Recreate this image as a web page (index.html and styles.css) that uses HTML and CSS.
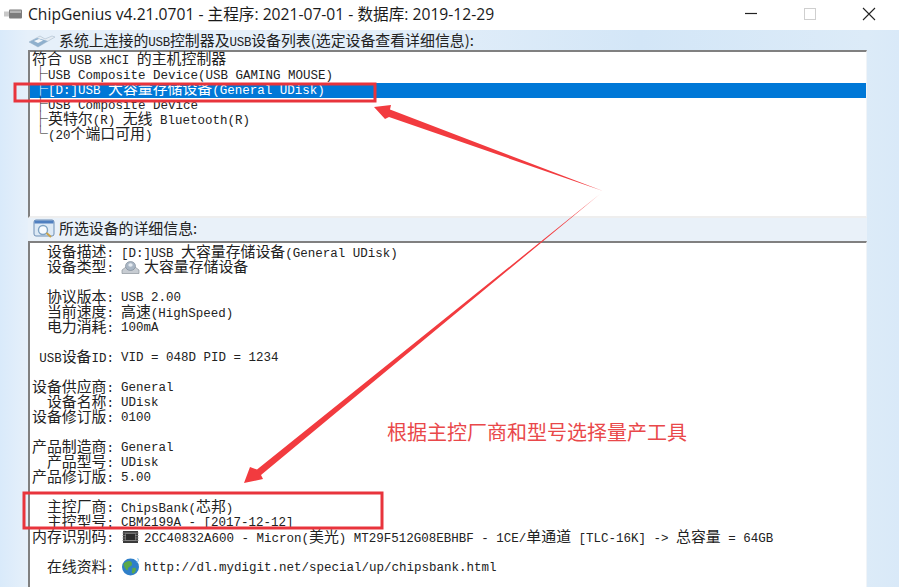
FILE: index.html
```html
<!DOCTYPE html>
<html lang="zh-CN">
<head>
<meta charset="utf-8">
<title>ChipGenius</title>
<link rel="stylesheet" href="styles.css">
</head>
<body>
<div class="window">
  <header class="titlebar">
    <svg class="app-icon" width="18" height="10" viewBox="0 0 18 10"><rect x="0" y="2.500" width="5" height="5" fill="#c9c9c9"/><rect x="5" y="0.500" width="13" height="9" rx="1" fill="#7d7d7d"/><rect x="6" y="1.500" width="11" height="2.500" fill="#b5b5b5"/></svg>
    <span class="title-text">ChipGenius v4.21.0701 - 主程序: 2021-07-01 - 数据库: 2019-12-29</span>
    <div class="controls">
      <svg class="ctl" width="14" height="14" viewBox="0 0 14 14"><path d="M1 6.500H13" stroke="#222" stroke-width="1.200"/></svg>
      <svg class="ctl" width="14" height="14" viewBox="0 0 14 14"><rect x="1.500" y="1.500" width="11" height="11" fill="none" stroke="#cfcfcf"/></svg>
      <svg class="ctl" width="14" height="14" viewBox="0 0 14 14"><path d="M1 1L13 13M13 1L1 13" stroke="#222" stroke-width="1.100"/></svg>
    </div>
  </header>
  <main class="client">
    <div class="caption">
      <svg class="cap-icon-a" width="28" height="14" viewBox="0 0 28 14"><path d="M1 8L10 13L27 3L24 2L17 5L12 2Z" fill="#e6edf4" stroke="#a9bccd" stroke-width=".6"/><path d="M1 8L10 13L20 7L9 4Z" fill="#8fb0cd"/><path d="M6 7L10 9L15 6.500L11 5Z" fill="#f4f7fa"/></svg>
      <span class="z">系统上连接的</span><span class="n">USB</span><span class="z">控制器及</span><span class="n">USB</span><span class="z">设备列表(选定设备查看详细信息):</span>
    </div>
    <section class="list">
      <div class="row"><span class="z">符合</span> USB xHCI <span class="z">的主机控制器</span></div>
      <div class="row"><span class="z tree">├</span>USB Composite Device(USB GAMING MOUSE)</div>
      <div class="row selected"><span class="z tree">├</span>[D:]USB <span class="z">大容量存储设备</span>(General UDisk)</div>
      <div class="row"><span class="z tree">├</span>USB Composite Device</div>
      <div class="row"><span class="z tree">├</span><span class="z">英特尔</span>(R) <span class="z">无线</span> Bluetooth(R)</div>
      <div class="row"><span class="z tree">└</span>(20<span class="z">个端口可用</span>)</div>
    </section>
    <div class="caption second">
      <svg class="cap-icon-b" width="22" height="19" viewBox="0 0 22 19"><rect x="1" y="1" width="20" height="16" rx="2" fill="#dce9f5" stroke="#6f8fb5"/><rect x="1.500" y="1.500" width="19" height="3" fill="#4f7fc0"/><circle cx="10" cy="11" r="4.500" fill="#f7fbff" stroke="#7fa3c4" stroke-width="1.400"/><path d="M13.500 14L18 18" stroke="#c9a24a" stroke-width="2"/></svg>
      <span class="z">所选设备的详细信息:</span>
    </div>
    <section class="details">
      <div class="kv"><span class="k"><span class="z">设备描述</span>:</span><span class="v">[D:]USB <span class="z">大容量存储设备</span>(General UDisk)</span></div>
      <div class="kv"><span class="k"><span class="z">设备类型</span>:</span><span class="v"><svg class="inl" width="19" height="15" viewBox="0 0 19 15"><path d="M1 10L5 7H14L18 10V13.500H1Z" fill="#c7ccd2" stroke="#8b939b" stroke-width=".7"/><ellipse cx="9.500" cy="6" rx="5" ry="4.500" fill="#a9b6c4" stroke="#7b8794" stroke-width=".6"/><ellipse cx="9.500" cy="5" rx="2.200" ry="1.700" fill="#e4eaf0"/></svg><span class="z">大容量存储设备</span></span></div>
      <div class="blank"></div>
      <div class="kv"><span class="k"><span class="z">协议版本</span>:</span><span class="v">USB 2.00</span></div>
      <div class="kv"><span class="k"><span class="z">当前速度</span>:</span><span class="v"><span class="z">高速</span>(HighSpeed)</span></div>
      <div class="kv"><span class="k"><span class="z">电力消耗</span>:</span><span class="v">100mA</span></div>
      <div class="blank"></div>
      <div class="kv"><span class="k">USB<span class="z">设备</span>ID:</span><span class="v">VID = 048D PID = 1234</span></div>
      <div class="blank"></div>
      <div class="kv"><span class="k"><span class="z">设备供应商</span>:</span><span class="v">General</span></div>
      <div class="kv"><span class="k"><span class="z">设备名称</span>:</span><span class="v">UDisk</span></div>
      <div class="kv"><span class="k"><span class="z">设备修订版</span>:</span><span class="v">0100</span></div>
      <div class="blank"></div>
      <div class="kv"><span class="k"><span class="z">产品制造商</span>:</span><span class="v">General</span></div>
      <div class="kv"><span class="k"><span class="z">产品型号</span>:</span><span class="v">UDisk</span></div>
      <div class="kv"><span class="k"><span class="z">产品修订版</span>:</span><span class="v">5.00</span></div>
      <div class="blank"></div>
      <div class="kv"><span class="k"><span class="z">主控厂商</span>:</span><span class="v">ChipsBank(<span class="z">芯邦</span>)</span></div>
      <div class="kv"><span class="k"><span class="z">主控型号</span>:</span><span class="v">CBM2199A - [2017-12-12]</span></div>
      <div class="kv"><span class="k"><span class="z">内存识别码</span>:</span><span class="v"><svg class="inl" width="19" height="15" viewBox="0 0 19 15"><rect x="2" y="1" width="15" height="12" fill="#3a3a3a"/><rect x="4" y="3" width="11" height="8" fill="#666"/><path d="M1 3H18M1 5.500H18M1 8H18M1 10.500H18" stroke="#999" stroke-width=".6"/><rect x="5" y="4" width="9" height="6" fill="#2c2c2c"/></svg>2CC40832A600 - Micron(<span class="z">美光</span>) MT29F512G08EBHBF - 1CE/<span class="z">单通道</span> [TLC-16K] -&gt; <span class="z">总容量</span> = 64GB</span></div>
      <div class="blank"></div>
      <div class="kv"><span class="k"><span class="z">在线资料</span>:</span><span class="v"><svg class="inl globe" width="19" height="20" viewBox="0 0 19 20"><circle cx="9.500" cy="10" r="8.500" fill="#2f7fc9"/><path d="M5 5C8 3 11 4 11 7S7 9 7 12 4 12 3 9 3 6 5 5ZM12 11C15 10 16 12 14 15S10 16 11 14 10 12 12 11Z" fill="#5aa84a"/><path d="M16 2C18 1 18 3 16 6" stroke="#7fc4ee" fill="none"/></svg>http://dl.mydigit.net/special/up/chipsbank.html</span></div>
    </section>
  </main>
</div>
<svg class="overlay" width="899" height="587" viewBox="0 0 899 587">
  <rect class="mark" x="15" y="84" width="360" height="17"/>
  <rect class="mark" x="24" y="493" width="358" height="35"/>
  <polygon class="arrow" points="374,107 391,105 390,109.500 603,191 389,117 385,119"/>
  <polygon class="arrow" points="244,483 250,467 257,469.500 600,194 261,475 263,479"/>
</svg>
<div class="note">根据主控厂商和型号选择量产工具</div>
</body>
</html>
```
FILE: styles.css
```css
* { box-sizing: border-box; }
html, body { margin: 0; height: 100%; overflow: hidden; background: #fff; }
body { position: relative; width: 899px; height: 587px; }
.window { display: flex; flex-direction: column; height: 587px; }

.titlebar { display: flex; align-items: center; height: 30px; flex: none; padding: 0 0 3px 4px; background: #fff; }
.app-icon { flex: none; margin-right: 6px; }
.title-text { font: 15.65px/26px "Open Sans", "Noto Sans CJK SC", sans-serif; color: #1a1a1a; white-space: nowrap; }
.controls { margin-left: auto; margin-top: 1px; display: flex; gap: 45px; padding-right: 23px; }
.ctl { display: block; }

.client {
  flex: 1; min-height: 0; display: flex; flex-direction: column;
  padding-left: 28px; padding-right: 32px;
  background: linear-gradient(90deg, #d9eafa 0, #e6f0fa 28px, #e6f0fa 240px, #e2eef9 420px, #d3e6f7 640px, #dcebf8 867px, #d9e9f8 899px);
  font: 12.5px/15px "Liberation Mono", "Noto Sans CJK SC", monospace;
  color: #222;
}
.z { font: 14.9px/9px "Noto Sans CJK SC", sans-serif; }
.n { font-size: 12.5px; letter-spacing: -.3px; }

.caption { height: 20px; flex: none; padding: 3px 0 0 31px; line-height: 20px; position: relative; white-space: nowrap; }
.cap-icon-a { position: absolute; left: 0; top: 4px; }
.cap-icon-b { position: absolute; left: 5px; top: 1px; }
.caption.second { height: 23px; padding-top: 3px; background: #e9f1f9; }

.list { height: 168px; flex: none; background: #fff; border-top: 2px solid #808080; border-left: 2px solid #808080; border-right: 1px solid #f0f4f8; border-bottom: 2px solid #eeeeee; padding-top: 1px; }
.row { height: 15px; line-height: 15px; padding-left: 2px; white-space: pre; }
.tree { display: inline-block; width: 16px; text-align: right; color: #222; }
.selected { background: #0078d7; color: #fff; }
.selected .tree { color: #fff; }

.details { flex: 1; min-height: 0; overflow: hidden; background: #fff; border-top: 2px solid #808080; border-left: 2px solid #808080; border-right: 1px solid #f0f4f8; padding-top: 3px; }
.kv { display: flex; height: 15px; line-height: 15px; white-space: pre; }
.k { width: 84px; flex: none; text-align: right; }
.v { margin-left: 7px; }
.blank { height: 15px; }
.inl { margin: -8px 4px 0 0; vertical-align: -3px; }
.globe { margin-top: -14px; vertical-align: -6px; }

.overlay { position: absolute; left: 0; top: 0; pointer-events: none; }
.mark { fill: none; stroke: #e8343c; stroke-width: 3; }
.arrow { fill: #f23b3f; }
.note { position: absolute; left: 387px; top: 419px; font: 20px/26px "Noto Sans CJK SC", sans-serif; color: #e9484a; white-space: nowrap; }
```
